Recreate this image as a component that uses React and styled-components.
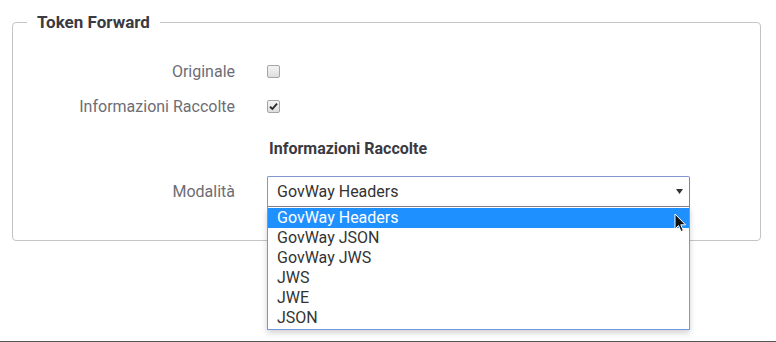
import React from "react";
import styled, { createGlobalStyle } from "styled-components";

const Global = createGlobalStyle`
  html, body { margin: 0; padding: 0; background: #fff; }
  body { font-family: Roboto, "Liberation Sans", sans-serif; }
`;

const Page = styled.div`
  box-sizing: border-box;
  height: 342px;
  border-bottom: 1px solid #555;
  padding: 12px 15px 0 12px;
`;

const Fieldset = styled.fieldset`
  margin: 0;
  padding: 22px 0 33px 0;
  border: 1px solid #c4c4c4;
  border-radius: 4px;
  min-width: 0;
`;

const Legend = styled.legend`
  margin-left: 14px;
  padding: 0 10px;
  font-size: 17px;
  line-height: 20px;
  font-weight: 700;
  color: #3a3a42;
`;

const Row = styled.div`
  display: grid;
  grid-template-columns: 222px 1fr;
  column-gap: 32px;
  align-items: center;
  min-height: ${(p) => p.$h || 35}px;
  margin-top: ${(p) => p.$mt || 0}px;
`;

const Label = styled.div`
  text-align: right;
  font-size: 16px;
  color: #6d6d75;
`;

const Heading = styled.div`
  font-size: 16px;
  font-weight: 700;
  color: #3a3a42;
  padding-left: 2px;
`;

const Box = styled.span`
  display: inline-flex;
  align-items: center;
  justify-content: center;
  width: 11px;
  height: 11px;
  border: 1px solid #a5a5a5;
  border-radius: 2px;
  background: linear-gradient(#f4f4f4, #dedede);
`;

const Control = styled.div`
  position: relative;
  display: flex;
  align-items: center;
`;

const Select = styled.div`
  position: relative;
  width: 423px;
  height: 31px;
  box-sizing: border-box;
  border: 1px solid #8c7e93;
  border-top-color: #7f98cf;
  border-left-color: #7f98cf;
  border-radius: 2px 2px 0 0;
  display: flex;
  align-items: center;
  padding: 0 9px;
  font-size: 16px;
  color: #333;
  background: #fff;
`;

const Arrow = styled.svg`
  position: absolute;
  right: 6px;
  top: 12px;
`;

const List = styled.div`
  position: absolute;
  top: 31px;
  left: 0;
  width: 423px;
  box-sizing: border-box;
  padding: 1px 0;
  border: 1px solid #7097e0;
  border-top: none;
  background: #fff;
  box-shadow: 0 3px 6px rgba(0, 0, 0, 0.18);
  z-index: 2;
`;

const Option = styled.div`
  height: 20px;
  line-height: 20px;
  padding-left: 9px;
  font-size: 16px;
  color: ${(p) => (p.$active ? "#fff" : "#333")};
  background: ${(p) => (p.$active ? "#1e90ff" : "transparent")};
`;

const Cursor = styled.svg`
  position: absolute;
  left: 407px;
  top: 37px;
  z-index: 3;
`;

const Check = () => (
  <svg width="9" height="9" viewBox="0 0 9 9">
    <path d="M1 4.8 L3.4 7 L8 1.6" fill="none" stroke="#2b2b2b" strokeWidth="1.9" />
  </svg>
);

const options = ["GovWay Headers", "GovWay JSON", "GovWay JWS", "JWS", "JWE", "JSON"];

export default function App() {
  return (
    <>
      <Global />
      <Page>
        <Fieldset>
          <Legend>Token Forward</Legend>
          <Row>
            <Label>Originale</Label>
            <Control>
              <Box />
            </Control>
          </Row>
          <Row>
            <Label>Informazioni Raccolte</Label>
            <Control>
              <Box>
                <Check />
              </Box>
            </Control>
          </Row>
          <Row $mt={7}>
            <span />
            <Heading>Informazioni Raccolte</Heading>
          </Row>
          <Row $h={31} $mt={10}>
            <Label>Modalità</Label>
            <Control>
              <Select>
                GovWay Headers
                <Arrow width="7" height="5" viewBox="0 0 7 5">
                  <path d="M0 0 H7 L3.5 5 Z" fill="#333" />
                </Arrow>
              </Select>
              <List>
                {options.map((o, i) => (
                  <Option key={o} $active={i === 0}>
                    {o}
                  </Option>
                ))}
              </List>
              <Cursor width="13" height="20" viewBox="0 0 13 20">
                <path
                  d="M1 1 L1 16 L4.5 12.5 L7 18.5 L9.3 17.5 L6.8 11.8 L11.5 11.8 Z"
                  fill="#111"
                  stroke="#fff"
                  strokeWidth="1"
                  strokeLinejoin="round"
                />
              </Cursor>
            </Control>
          </Row>
        </Fieldset>
      </Page>
    </>
  );
}
